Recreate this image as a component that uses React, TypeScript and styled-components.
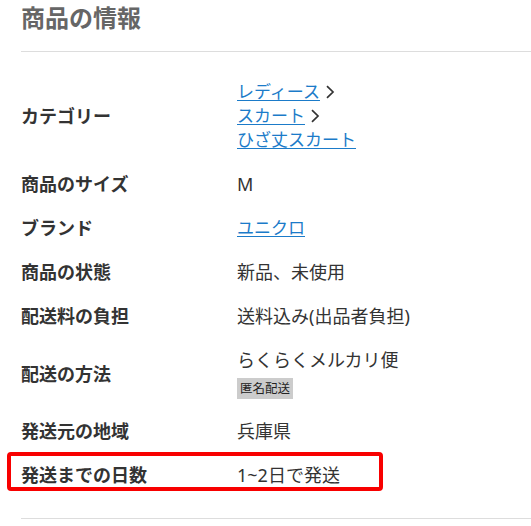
import React from "react";
import styled, { createGlobalStyle } from "styled-components";

const GlobalStyle = createGlobalStyle`
  html, body {
    margin: 0;
    padding: 0;
    background: #fff;
  }
  body {
    font-family: "Noto Sans", "Noto Sans CJK JP", sans-serif;
    color: #333;
  }
`;

const Section = styled.section`
  padding-left: 21px;
  width: 510px;
`;

const Title = styled.h2`
  margin: 0;
  padding: 0 0 15px 0;
  font-size: 24px;
  line-height: 36px;
  font-weight: 700;
  color: #666;
  border-bottom: 1px solid #ddd;
`;

const Table = styled.div`
  display: flex;
  flex-direction: column;
  padding: 18px 0 21px;
  border-bottom: 1px solid #ddd;
`;

const Row = styled.div<{ $highlight?: boolean }>`
  position: relative;
  display: grid;
  grid-template-columns: 216px 1fr;
  align-items: center;
  padding: 10px 0;

  ${({ $highlight }) =>
    $highlight &&
    `
    &::after {
      content: "";
      position: absolute;
      left: -14px;
      top: -1px;
      width: 376px;
      height: 39px;
      border: 4px solid #f80000;
      border-radius: 4px;
      box-sizing: border-box;
      pointer-events: none;
    }
  `}
`;

const Label = styled.div`
  font-size: 18px;
  line-height: 24px;
  font-weight: 700;
  color: #333;
`;

const Value = styled.div`
  font-size: 18px;
  line-height: 24px;
  color: #333;
  display: flex;
  flex-direction: column;
  align-items: flex-start;
`;

const CrumbLine = styled.div`
  display: flex;
  align-items: center;
  gap: 5px;
  height: 24px;
`;

const Link = styled.a`
  font-size: 17px;
  line-height: 24px;
  color: #1b7bc9;
  text-decoration: underline;
  text-underline-offset: 2px;
`;

const Badge = styled.span`
  display: inline-block;
  margin-top: 6px;
  padding: 0 3px;
  height: 21px;
  line-height: 21px;
  font-size: 12.5px;
  background: #ccc;
  color: #222;
`;

const Chevron = () => (
  <svg width="10" height="14" viewBox="0 0 10 14" aria-hidden="true">
    <path d="M2 1.2 L8 7 L2 12.8" fill="none" stroke="#333" strokeWidth="1.7" />
  </svg>
);

export default function App() {
  return (
    <>
      <GlobalStyle />
      <Section>
        <Title>商品の情報</Title>
        <Table>
          <Row>
            <Label>カテゴリー</Label>
            <Value>
              <CrumbLine>
                <Link href="#">レディース</Link>
                <Chevron />
              </CrumbLine>
              <CrumbLine>
                <Link href="#">スカート</Link>
                <Chevron />
              </CrumbLine>
              <CrumbLine>
                <Link href="#">ひざ丈スカート</Link>
              </CrumbLine>
            </Value>
          </Row>
          <Row>
            <Label>商品のサイズ</Label>
            <Value>M</Value>
          </Row>
          <Row>
            <Label>ブランド</Label>
            <Value>
              <Link href="#">ユニクロ</Link>
            </Value>
          </Row>
          <Row>
            <Label>商品の状態</Label>
            <Value>新品、未使用</Value>
          </Row>
          <Row>
            <Label>配送料の負担</Label>
            <Value>送料込み(出品者負担)</Value>
          </Row>
          <Row>
            <Label>配送の方法</Label>
            <Value>
              <span>らくらくメルカリ便</span>
              <Badge>匿名配送</Badge>
            </Value>
          </Row>
          <Row>
            <Label>発送元の地域</Label>
            <Value>兵庫県</Value>
          </Row>
          <Row $highlight>
            <Label>発送までの日数</Label>
            <Value>1~2日で発送</Value>
          </Row>
        </Table>
      </Section>
    </>
  );
}
